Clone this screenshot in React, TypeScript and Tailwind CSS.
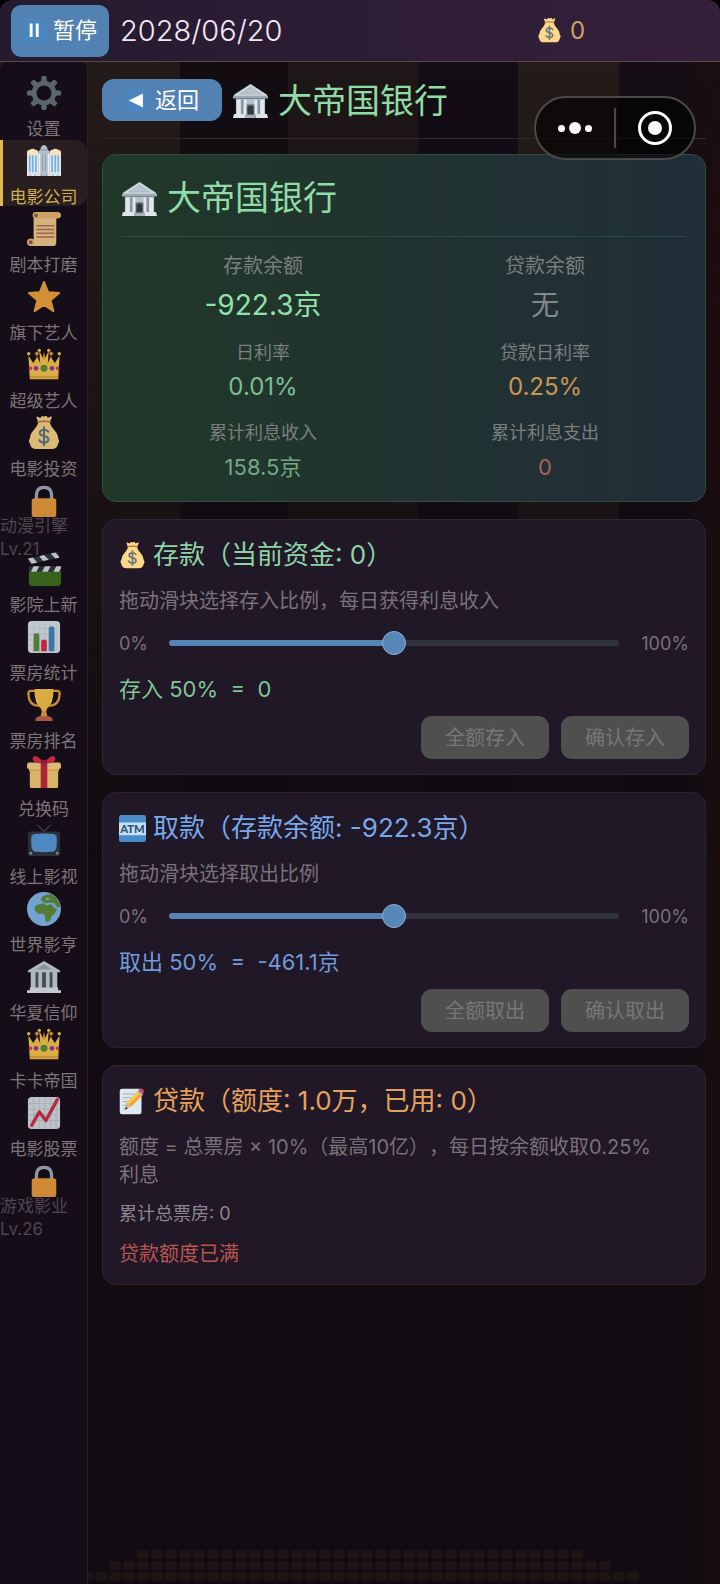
import React, { useState } from 'react';

type IconProps = { className?: string };

const Svg: React.FC<{ className?: string; children: React.ReactNode }> = ({ className, children }) => (
  <svg viewBox="0 0 36 36" className={className} aria-hidden="true">
    {children}
  </svg>
);

const GearIcon = ({ className }: IconProps) => (
  <Svg className={className}>
    <g fill="#66757f">
      {[0, 45, 90, 135, 180, 225, 270, 315].map((a) => (
        <path key={a} d="M14.800 8 15.300 1.200Q15.500 0 16.500 0h3q1 0 1.200 1.200L21.200 8z" transform={`rotate(${a} 18 18)`} />
      ))}
    </g>
    <circle cx="18" cy="18" r="10.500" fill="none" stroke="#66757f" strokeWidth="5" />
  </Svg>
);

const StudioIcon = ({ className }: IconProps) => (
  <Svg className={className}>
    <path fill="#e1e8ed" d="M0 9h12v25H0zM24 9h12v25H24z" />
    <path fill="#f6e3c2" d="M0 12V8q1-2 3-2 3-2 6 0 2 0 3 2v4zM24 12V8q1-2 3-2 3-2 6 0 2 0 3 2v4z" />
    <path fill="#b4bfca" d="M12 34V8l2-2 1-3q3-4 6 0l1 3 2 2v26z" />
    <path fill="#8da0ae" d="M14 5.500h8V7h-8zM16 11h1v18h-1zM19 11h1v18h-1z" />
    <path fill="#76b0e0" d="M2 12h1.800v18H2zM5.200 12H7v18H5.200zM8.600 12h1.800v18H8.600zM25.600 12h1.800v18h-1.800zM29 12h1.800v18H29zM32.200 12H34v18h-1.800z" />
    <path fill="#e8edf0" d="M12 10h2v24h-2zM22 10h2v24h-2z" />
    <path fill="#8899a6" d="M3 32h1v2H3zM8 32h1v2H8zM15 32h1v2h-1zM20 32h1v2h-1zM27 32h1v2h-1zM32 32h1v2h-1z" />
  </Svg>
);

const ScrollIcon = ({ className }: IconProps) => (
  <Svg className={className}>
    <path fill="#f6d08e" d="M7 3h24v29q0 4-3 4H4V31h3z" />
    <circle cx="4" cy="32" r="4" fill="#eebf79" />
    <circle cx="4" cy="32" r="2" fill="#8f604a" />
    <path fill="#eebc72" d="M9 0h23q4 0 4 3.500T32 7H9z" />
    <circle cx="9.500" cy="3.500" r="3.500" fill="#eebf79" />
    <circle cx="9.500" cy="3.500" r="2" fill="#8f604a" />
    <path stroke="#b5735a" strokeWidth="1.600" d="M10 14.500h19M10 18.500h19M10 22.500h19M10 26.500h19" />
  </Svg>
);

const StarIcon = ({ className }: IconProps) => (
  <Svg className={className}>
    <path
      fill="#f5a63c"
      stroke="#f5a63c"
      strokeWidth="2"
      strokeLinejoin="round"
      d="m18 2 4.500 11 11.500.800-9 7.700 3 11.500-10-6.500L8 33l3-11.500-9-7.700 11.500-.800z"
    />
  </Svg>
);

const CrownIcon = ({ className }: IconProps) => (
  <Svg className={className}>
    <path fill="#e39a37" d="m9 20 1.500-12L15 18l3-14 3 14 4.500-10L27 20z" />
    <circle cx="10.500" cy="6" r="2" fill="#e39a37" />
    <circle cx="25.500" cy="6" r="2" fill="#e39a37" />
    <path fill="#fccb4d" d="M3 33 1.500 8l5 8 4-6 3.500 7-1-14 5 10 5-10-1 14 3.500-7 4 6 5-8L33 33z" />
    <g fill="#fccb4d">
      <circle cx="1.800" cy="6" r="1.800" />
      <circle cx="34.200" cy="6" r="1.800" />
      <circle cx="13" cy="2.500" r="1.800" />
      <circle cx="23" cy="2.500" r="1.800" />
    </g>
    <path fill="#e39a37" d="M3 30h30v1.500H3z" />
    <circle cx="18" cy="21.500" r="3.700" fill="#5c913b" />
    <circle cx="9.500" cy="21.500" r="2.500" fill="#9233b8" />
    <circle cx="26.500" cy="21.500" r="2.500" fill="#9233b8" />
    <circle cx="3.500" cy="21.500" r="1.900" fill="#dd2e60" />
    <circle cx="32.500" cy="21.500" r="1.900" fill="#dd2e60" />
  </Svg>
);

const MoneyBagIcon = ({ className }: IconProps) => (
  <Svg className={className}>
    <path
      fill="#fdd888"
      d="M12 7 10 1.500q0-1.500 2-.500l2 1 2-2q1-.500 2 1 2-2 3-1l1 2 3-1.500q2-.500 1 1.500L24 7q1 4 5 8 4 4 4 9 2 3 0 5-1 6-7 6H10q-6 0-7-6-2-3 0-5 0-5 4-9t5-8z"
    />
    <path fill="#bf6952" d="M11 5.500q7-1.500 14 0 1 1 0 1.500-7-1.500-14 0-1-.500 0-1.500z" />
    <path
      fill="none"
      stroke="#67757f"
      strokeWidth="2.200"
      strokeLinecap="round"
      d="M22.500 16.500q-1.500-2-4.500-2-4.500.300-4.500 3.300 0 2.700 4.500 3.400 4.700.800 4.700 3.800t-4.700 3.300q-3.500 0-5-2.800M18 12v19"
    />
  </Svg>
);

const LockIcon = ({ className }: IconProps) => (
  <Svg className={className}>
    <path fill="none" stroke="#a3b0c0" strokeWidth="3.500" d="M10 18v-6q0-8.500 8-8.500t8 8.500v6" />
    <rect x="5" y="15" width="26" height="20" rx="3" fill="#f0a03b" />
  </Svg>
);

const ClapperIcon = ({ className }: IconProps) => (
  <Svg className={className}>
    <path fill="#3e721d" d="M2 20h34v12q0 4-4 4H6q-4 0-4-4z" />
    <path fill="#31373d" d="M2 15h34v6H2zM1 7 33 0l1 6L3 13z" />
    <path
      fill="#dce2e6"
      d="m7 15-3 6h6l3-6zm12 0-3 6h6l3-6zm12 0-3 6h6l2-4v-2zM1 7l5-1.100L11 11l-6 1.400zM13 4.400l5-1.100 5 5-6 1.300zM25 1.700 30 .600l4 4.400v1l-4 .800z"
    />
  </Svg>
);

const BarChartIcon = ({ className }: IconProps) => (
  <Svg className={className}>
    <rect x="1" y="1" width="34" height="34" rx="4" fill="#dfe8f0" />
    <path stroke="#cbd8e3" strokeWidth="1" d="M1 9h34M1 15h34M1 21h34M1 27h34M7 1v34M13 1v34M19 1v34M25 1v34M31 1v34" />
    <path fill="#5c913b" d="M7 16q0-2 2-2h2q2 0 2 2v17H7z" />
    <path fill="#dd2e44" d="M15 23q0-2 2-2h2q2 0 2 2v10h-6z" />
    <path fill="#4289c1" d="M23 9q0-2 2-2h2q2 0 2 2v24h-6z" />
  </Svg>
);

const TrophyIcon = ({ className }: IconProps) => (
  <Svg className={className}>
    <path fill="none" stroke="#eda13c" strokeWidth="2.500" d="M9 3H4Q1 3 1.500 7q.500 11 10.500 12M27 3h5q3 0 2.500 4-.500 11-10.500 12" />
    <path fill="#fcc94b" d="M8 1h20q.500 16-7 21l-1 5h-4l-1-5Q7.500 17 8 1z" />
    <path fill="#eda13c" d="M16 24h4l2 7h-8z" />
    <path fill="#c1694f" d="M12 30h12l3 2v3H9v-3z" />
  </Svg>
);

const GiftIcon = ({ className }: IconProps) => (
  <Svg className={className}>
    <path fill="#fcd27a" d="M3 13h30v19q0 2-2 2H5q-2 0-2-2z" />
    <path fill="#f7bc5a" d="M2 13h32v3H2z" />
    <rect y="7" width="36" height="7" rx="2.500" fill="#fdd888" />
    <path fill="#c6293f" d="M14.500 6h7v28h-7z" />
    <path fill="#dd2e44" d="M18 8Q5 8 6 2q2-4 7 0l3 3h4l3-3q5-4 7 0 1 6-12 6z" />
    <path fill="#9e2137" d="M15 4h6v4h-6z" />
  </Svg>
);

const TvIcon = ({ className }: IconProps) => (
  <Svg className={className}>
    <path stroke="#3c4650" strokeWidth="1.500" d="m11 1 7 7 7-7" fill="none" />
    <rect x="1" y="8" width="34" height="26" rx="2.500" fill="#31373d" />
    <path fill="#5b9fe0" d="M8 10.500q10-1 20 0 3.500.500 3.500 5v6q0 7-4 8-9.500 1-19 0-4-1-4-8v-6q0-4.500 3.500-5z" />
    <circle cx="4" cy="31" r="1.500" fill="#8899a6" />
    <circle cx="32" cy="31" r="1.500" fill="#8899a6" />
  </Svg>
);

const GlobeIcon = ({ className }: IconProps) => (
  <Svg className={className}>
    <circle cx="18" cy="18" r="18" fill="#86bdf2" />
    <path
      fill="#5c913b"
      d="M8 17q1-4 5-4l4-1 4 2 5-1 3 4 3 1-2 4-4 4-1 4-4 2q-2-1-2-5l-1-4-6 0q-4-2-4-6zM14 9l2-4 4-2 6-1 5 4 4 7-1 4-3-2-2-3-5-1-3 1-4-1-1-2z"
    />
    <path fill="#86bdf2" d="m20 7 2-1 2 1-1 1.500h-3z" />
  </Svg>
);

const TempleIcon = ({ className }: IconProps) => (
  <Svg className={className}>
    <path fill="#4b5660" d="M4 12h28v18H4z" />
    <path fill="#ccd6dd" d="M1 11 18 1l17 10v2H1zM4 13h5v17H4zM12 13h4v17h-4zM20 13h4v17h-4zM27 13h5v17h-5z" />
    <path fill="#9aaab4" d="m9 10 9-5.500L27 10z" />
    <path fill="#e1e8ed" d="M3 29h30v3h3v3H0v-3h3z" />
  </Svg>
);

const StockIcon = ({ className }: IconProps) => (
  <Svg className={className}>
    <rect x="1" y="1" width="34" height="34" rx="4" fill="#dce2e8" />
    <path stroke="#c3cbd3" strokeWidth="1" d="M1 8h34M1 14h34M1 20h34M1 26h34M7 1v34M13 1v34M19 1v34M25 1v34M31 1v34" />
    <path fill="none" stroke="#cf2f48" strokeWidth="3.600" strokeLinecap="round" strokeLinejoin="round" d="m5 31 8-14 7 9L32 4" />
  </Svg>
);

const BankIcon = ({ className }: IconProps) => (
  <Svg className={className}>
    <path fill="#b3bec8" d="M3 16h30v17H3z" />
    <path fill="#8b98a4" d="M8 17h3v15H8zM25 17h3v15h-3z" />
    <path fill="#e1e8ed" d="M4 17h4v15H4zM11 17h3v15h-3zM22 17h3v15h-3zM28 17h4v15h-4z" />
    <path fill="#66757f" d="M14 22h8v11h-8z" />
    <path fill="#31373d" d="M15 32v-7q3-4 6 0v7z" />
    <path fill="#ccd6dd" d="M18 1 1 12v2h34v-2z" />
    <path fill="#9aaab4" d="M0 13h36v3H0zM6 11.500 18 4l12 7.500z" />
    <path fill="#b8c3cd" d="m7 11 11-6 11 6z" />
    <path fill="#dde4ea" d="M1 32h12v4H0zM23 32h12l1 4H23z" />
    <path fill="#a7b3bd" d="M13 33h10v3H13z" />
  </Svg>
);

const AtmIcon = ({ className }: IconProps) => (
  <Svg className={className}>
    <rect width="36" height="36" rx="3" fill="#4a8cc9" />
    <path fill="#c3e0f6" d="M0 10h36v17H0z" />
    <text x="18" y="24" textAnchor="middle" fontSize="15" fontWeight="900" fontFamily="Lato, sans-serif" fill="#2f5373">
      ATM
    </text>
  </Svg>
);

const MemoIcon = ({ className }: IconProps) => (
  <Svg className={className}>
    <rect x="1" y="1" width="29" height="34" rx="3" fill="#dfe8ef" />
    <path stroke="#9fb0bf" strokeWidth="1.500" d="M5 8h17M5 13h15M5 18h10M5 23h6M5 28h4" />
    <path fill="#fbc94a" d="M25 4 31 10 16 25 10 19z" />
    <path fill="#f1a33c" d="m28 7 3 3-15 15-3-3z" />
    <path fill="#d1495b" d="M28 1q2-1 4 1t1 4l-2 3-6-5z" />
    <path fill="#a7b3bd" d="m24 4.500 1.500-1.500 6.500 6-1.500 1.500z" />
    <path fill="#dfb48c" d="m10 19 6 6-8 3z" />
    <path fill="#31373d" d="m9 25 3 2-4 2z" />
  </Svg>
);

const PauseIcon = ({ className }: IconProps) => (
  <Svg className={className}>
    <rect width="36" height="36" rx="4" fill="#4b87be" />
    <path fill="#fff" d="M10.500 7h4.500v21h-4.500zM20 7h4.500v21H20z" />
  </Svg>
);

const BackIcon = ({ className }: IconProps) => (
  <Svg className={className}>
    <rect width="36" height="36" rx="4" fill="#4b87be" />
    <path fill="#fff" d="M28 7v22L6 18z" />
  </Svg>
);

type NavItem = { label: string; icon: React.FC<IconProps>; level?: number; active?: boolean };

const navItems: NavItem[] = [
  { label: '设置', icon: GearIcon },
  { label: '电影公司', icon: StudioIcon, active: true },
  { label: '剧本打磨', icon: ScrollIcon },
  { label: '旗下艺人', icon: StarIcon },
  { label: '超级艺人', icon: CrownIcon },
  { label: '电影投资', icon: MoneyBagIcon },
  { label: '动漫引擎', icon: LockIcon, level: 21 },
  { label: '影院上新', icon: ClapperIcon },
  { label: '票房统计', icon: BarChartIcon },
  { label: '票房排名', icon: TrophyIcon },
  { label: '兑换码', icon: GiftIcon },
  { label: '线上影视', icon: TvIcon },
  { label: '世界影亨', icon: GlobeIcon },
  { label: '华夏信仰', icon: TempleIcon },
  { label: '卡卡帝国', icon: CrownIcon },
  { label: '电影股票', icon: StockIcon },
  { label: '游戏影业', icon: LockIcon, level: 26 },
];

const stats = [
  { label: '存款余额', value: '-922.3京', labelCls: 'text-[20px] leading-[30px]', valueCls: 'mt-1 text-[28px] leading-[40px] text-[#93e0a8]' },
  { label: '贷款余额', value: '无', labelCls: 'text-[20px] leading-[30px]', valueCls: 'mt-1 text-[28px] leading-[40px] text-[#84888a]' },
  { label: '日利率', value: '0.01%', labelCls: 'text-[18px] leading-[28px]', valueCls: 'mt-[2px] text-[24px] leading-[36px] text-[#7fbd93]' },
  { label: '贷款日利率', value: '0.25%', labelCls: 'text-[18px] leading-[28px]', valueCls: 'mt-[2px] text-[24px] leading-[36px] text-[#cd9355]' },
  { label: '累计利息收入', value: '158.5京', labelCls: 'text-[18px] leading-[28px]', valueCls: 'mt-[2px] text-[22px] leading-[36px] text-[#74a887]' },
  { label: '累计利息支出', value: '0', labelCls: 'text-[18px] leading-[28px]', valueCls: 'mt-[2px] text-[22px] leading-[36px] text-[#ad605c]' },
];

const Sidebar: React.FC = () => (
  <nav className="w-[88px] shrink-0 rounded-t-lg border-r border-[#25202b] bg-[#150e19] pt-[10px]">
    <ul className="flex flex-col gap-[2px]">
      {navItems.map(({ label, icon: Icon, level, active }) => (
        <li key={label} className="h-[66px]">
          <button
            type="button"
            disabled={!!level}
            className={
              active
                ? 'flex h-full w-full flex-col items-center rounded-r-xl border-l-[3px] border-[#e3b94f] bg-[#2a1f20] pt-1 pr-[3px] text-[#cfae50]'
                : 'flex h-full w-full flex-col items-center pt-1 text-[#7d7577]'
            }
          >
            <Icon className={active ? 'size-[34px] shrink-0' : 'size-[34px] shrink-0 opacity-85'} />
            {level ? (
              <span className="-mt-[3px] w-full text-left text-[17px] leading-[23px] text-[#4d4750]">
                {label}
                <br />
                Lv.{level}
              </span>
            ) : (
              <span className="mt-[7px] text-[17px] leading-6 whitespace-nowrap">{label}</span>
            )}
          </button>
        </li>
      ))}
    </ul>
  </nav>
);

const RatioSlider: React.FC<{ id: string; label: string; value: number; onChange: (v: number) => void }> = ({
  id,
  label,
  value,
  onChange,
}) => (
  <div className="mt-[14px] flex h-7 items-center text-[18px] text-[#7b7178]">
    <label htmlFor={id} className="w-[50px] shrink-0" aria-label={label}>
      0%
    </label>
    <input
      id={id}
      type="range"
      min={0}
      max={100}
      value={value}
      onChange={(e) => onChange(Number(e.target.value))}
      className="h-[6px] min-w-0 flex-1 appearance-none rounded-full [&::-webkit-slider-thumb]:size-6 [&::-webkit-slider-thumb]:appearance-none [&::-webkit-slider-thumb]:rounded-full [&::-webkit-slider-thumb]:border [&::-webkit-slider-thumb]:border-[#8fb0d3] [&::-webkit-slider-thumb]:bg-[#5786b8]"
      style={{ background: `linear-gradient(to right, #5584b5 ${value}%, #313340 ${value}%)` }}
    />
    <span className="w-[70px] shrink-0 text-right">100%</span>
  </div>
);

const GreyButton: React.FC<{ children: React.ReactNode }> = ({ children }) => (
  <button type="button" disabled className="h-[43px] w-[128px] rounded-[11px] bg-[#4f4f4f] text-[20px] text-[#777777]">
    {children}
  </button>
);

const Seats: React.FC = () => (
  <div className="absolute inset-x-0 bottom-[3px] flex flex-col items-center gap-[2px] overflow-hidden" aria-hidden="true">
    {[32, 36, 40].map((count) => (
      <div key={count} className="flex gap-[2px]">
        {Array.from({ length: count }, (_, i) => (
          <span key={i} className="h-[9px] w-3 rounded-[2px] bg-[#1c1415]" />
        ))}
      </div>
    ))}
  </div>
);

const App: React.FC = () => {
  const [deposit, setDeposit] = useState(50);
  const [withdraw, setWithdraw] = useState(50);

  const cardCls = 'mt-[17px] rounded-[14px] border bg-[#201727] p-4 pb-[15px]';
  const descCls = 'mt-[13px] text-[20px] leading-7 text-[#7b7178]';

  return (
    <div className="relative flex min-h-screen flex-col bg-black font-['Inter','Noto_Sans_CJK_SC',sans-serif] [text-spacing-trim:space-all]">
      <header className="flex h-[62px] shrink-0 items-center rounded-t-xl border-b border-[#5d4648] bg-linear-to-r from-[#251a2e] to-[#35203b] pl-[11px]">
        <button type="button" className="flex h-[52px] items-center gap-[7px] rounded-[10px] bg-[#5281b3] px-3 text-[22px] text-white">
          <PauseIcon className="size-[23px]" />
          暂停
        </button>
        <time className="ml-[11px] flex-1 text-[29px] font-light text-[#f3e9f3]">2028/06/20</time>
        <span className="flex w-[183px] items-center gap-2 text-[24px] text-[#c9a368]">
          <MoneyBagIcon className="size-[25px]" />0
        </span>
      </header>

      <div className="relative flex flex-1 rounded-b-xl bg-[#110c11]">
        {/* curtain folds behind the content */}
        <div
          className="absolute inset-x-0 top-0 h-[800px] bg-[linear-gradient(to_right,#241b19_25%,#130d12_25%,#130d12_40%,#1e1717_40%,#1e1717_58%,#130d15_58%,#130d15_72%,#241c19_72%,#241c19_86%,#150e14_86%)] mask-b-from-0%"
          aria-hidden="true"
        />
        <div className="absolute inset-y-0 right-0 w-8 bg-linear-to-l from-[#1c0d11] to-transparent" aria-hidden="true" />
        <Seats />

        <div className="relative flex min-w-0 flex-1">
          <Sidebar />

          <main className="min-w-0 flex-1 px-[14px] pt-[17px] pb-8">
            <div className="flex items-center gap-[11px] border-b border-[#332b2b] pb-[17px]">
              <button type="button" className="flex h-[42px] w-[120px] items-center justify-center gap-[7px] rounded-xl bg-[#5281b3] text-[22px] text-white">
                <BackIcon className="size-[23px]" />
                返回
              </button>
              <h1 className="flex h-[42px] items-center gap-[10px] text-[34px] text-[#8fdca6]">
                <BankIcon className="size-[35px]" />
                大帝国银行
              </h1>
            </div>

            <section className="mt-[15px] rounded-[14px] border border-[#2f4d44] bg-linear-to-r from-[#203828] via-[#213330] to-[#212d38] px-[19px] pt-[19px] pb-4">
              <h2 className="flex h-[63px] items-start gap-[10px] border-b border-[#2c4944] text-[34px] leading-[48px] text-[#8fdca6]">
                <BankIcon className="mt-[7px] size-[35px]" />
                大帝国银行
              </h2>
              <dl className="grid grid-cols-2 gap-y-[14px] pt-[14px] text-center">
                {stats.map((s) => (
                  <div key={s.label}>
                    <dt className={`text-[#7b7f7d] ${s.labelCls}`}>{s.label}</dt>
                    <dd className={s.valueCls}>{s.value}</dd>
                  </div>
                ))}
              </dl>
            </section>

            <section className={`${cardCls} border-[#2c2731]`}>
              <h2 className="flex items-center gap-[7px] text-[26px] leading-[38px] text-[#8fd3a4]">
                <MoneyBagIcon className="size-[27px]" />
                存款（当前资金: 0）
              </h2>
              <p className={descCls}>拖动滑块选择存入比例，每日获得利息收入</p>
              <RatioSlider id="deposit" label="存入比例" value={deposit} onChange={setDeposit} />
              <p className="mt-4 text-[22px] leading-8 whitespace-pre text-[#7fc795]">存入 {deposit}%  =  0</p>
              <div className="mt-[11px] flex justify-end gap-3">
                <GreyButton>全额存入</GreyButton>
                <GreyButton>确认存入</GreyButton>
              </div>
            </section>

            <section className={`${cardCls} border-[#282636]`}>
              <h2 className="flex items-center gap-[7px] text-[26px] leading-[38px] text-[#78a8ea]">
                <AtmIcon className="size-[27px]" />
                取款（存款余额: -922.3京）
              </h2>
              <p className={descCls}>拖动滑块选择取出比例</p>
              <RatioSlider id="withdraw" label="取出比例" value={withdraw} onChange={setWithdraw} />
              <p className="mt-4 text-[22px] leading-8 whitespace-pre text-[#6f9bdb]">取出 {withdraw}%  =  -461.1京</p>
              <div className="mt-[11px] flex justify-end gap-3">
                <GreyButton>全额取出</GreyButton>
                <GreyButton>确认取出</GreyButton>
              </div>
            </section>

            <section className={`${cardCls} border-[#33262b]`}>
              <h2 className="flex items-center gap-[7px] text-[26px] leading-[38px] text-[#e6a25a]">
                <MemoIcon className="size-[27px]" />
                贷款（额度: 1.0万，已用: 0）
              </h2>
              <p className={descCls}>
                额度 = 总票房 × 10%（最高10亿），每日按余额收取0.25%
                <span className="inline-block">利息</span>
              </p>
              <p className="mt-[11px] text-[18px] leading-7 text-[#8f878d]">累计总票房: 0</p>
              <p className="mt-[11px] text-[20px] leading-[30px] text-[#ba5550]">贷款额度已满</p>
            </section>
          </main>
        </div>
      </div>

      {/* floating capsule menu */}
      <div className="absolute top-24 right-6 flex h-16 w-[162px] items-center rounded-full border-2 border-[#4b4a4a] bg-black/60">
        <button type="button" aria-label="更多" className="flex w-[78px] items-center justify-center gap-[4px]">
          <span className="size-[7px] rounded-full bg-white" />
          <span className="size-3 rounded-full bg-white" />
          <span className="size-[7px] rounded-full bg-white" />
        </button>
        <span className="h-10 w-[2px] bg-[#4b4a4a]" />
        <button type="button" aria-label="关闭" className="flex flex-1 items-center justify-center">
          <span className="flex size-[34px] items-center justify-center rounded-full border-[3px] border-white">
            <span className="size-[14px] rounded-full bg-white" />
          </span>
        </button>
      </div>
    </div>
  );
};

export default App;
